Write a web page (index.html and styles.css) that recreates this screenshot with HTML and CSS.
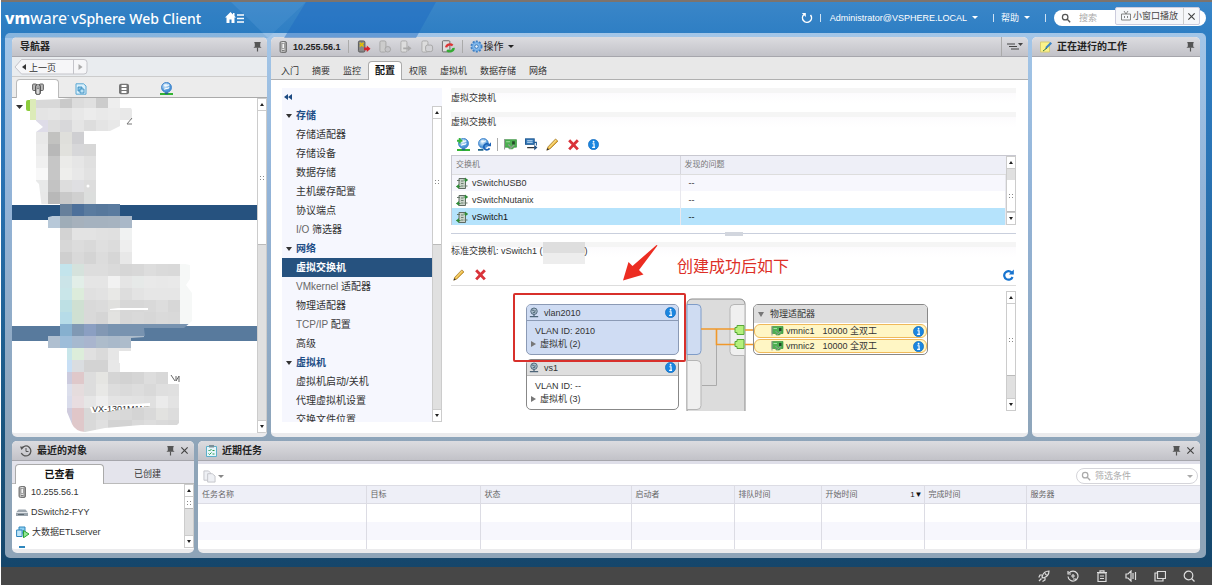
FILE: index.html
```html
<!DOCTYPE html>
<html lang="zh-CN">
<head>
<meta charset="utf-8">
<title>vSphere Web Client</title>
<link rel="stylesheet" href="styles.css">
</head>
<body>
<svg class="defs" aria-hidden="true">
  <defs>
    <linearGradient id="g-host" x1="0" x2="1"><stop offset="0" stop-color="#8a8a8a"/><stop offset=".5" stop-color="#eee"/><stop offset="1" stop-color="#777"/></linearGradient>
    <radialGradient id="g-globe" cx=".4" cy=".35"><stop offset="0" stop-color="#e8f6ff"/><stop offset="1" stop-color="#4a94d8"/></radialGradient>
  </defs>
  <symbol id="i-host" viewBox="0 0 12 12"><rect x="3" y=".5" width="6.500" height="11" rx="1.500" fill="url(#g-host)" stroke="#777"/><rect x="5" y="2.300" width="2.500" height="5" fill="#f4f4f4" stroke="#777" stroke-width=".6"/><path d="M5 9.800h2.500" stroke="#555"/></symbol>
  <symbol id="i-hosts" viewBox="0 0 12 12"><rect x=".6" y="1" width="4" height="6.500" rx="1" fill="#bbb" stroke="#555" stroke-width=".9"/><rect x="7.400" y="1" width="4" height="6.500" rx="1" fill="#bbb" stroke="#555" stroke-width=".9"/><rect x="3.600" y="1.800" width="4.800" height="9.600" rx="1.500" fill="url(#g-host)" stroke="#444" stroke-width=".9"/><path d="M5 4h2M5 5.600h2" stroke="#555" stroke-width=".7"/></symbol>
  <symbol id="i-vms" viewBox="0 0 12 12"><path d="M1 .8h7.500L11 3v8.200H1z" fill="#d9f0fc" stroke="#5aa7d2"/><path d="M3 4h4v4H3z" fill="#8bc6e8" stroke="#3186ba" stroke-width=".8"/><path d="M5 6h4v4H5z" fill="#b9e1f5" stroke="#3186ba" stroke-width=".8"/></symbol>
  <symbol id="i-db" viewBox="0 0 12 12"><rect x="1" y=".8" width="10" height="10.400" rx="2" fill="#777"/><path d="M3.500 2h5v2h-5zM3.500 5h5v2h-5zM3.500 8h5v2h-5z" fill="#fff"/></symbol>
  <symbol id="i-net" viewBox="0 0 12 12"><circle cx="6" cy="5" r="4.600" fill="url(#g-globe)" stroke="#3b7fca" stroke-width=".8"/><path d="M3.500 3c2-1 3 1 5-.5M4 7c1-2 3 0 4.500-2" fill="none" stroke="#fff"/><path d="M0 11h12" stroke="#32b432" stroke-width="1.800"/><path d="M4.500 9.800h3v1.600h-3z" fill="#268"/></symbol>
  <symbol id="i-netadd" viewBox="0 0 12 12"><use href="#i-net"/><path d="M2.500 0v5M0 2.500h5" stroke="#35b53a" stroke-width="1.800"/></symbol>
  <symbol id="i-netref" viewBox="0 0 12 12"><circle cx="5" cy="5" r="4.500" fill="url(#g-globe)" stroke="#3b7fca" stroke-width=".8"/><path d="M3 3c2-1 3 1 4.500-.5" fill="none" stroke="#fff"/><path d="M0 11h5" stroke="#268" stroke-width="1.500"/><path d="M10 6A2.800 2.800 0 1 0 10.600 9.500" fill="none" stroke="#1c63b8" stroke-width="1.600"/><path d="M12 4v3.600H8.400z" fill="#1c63b8"/></symbol>
  <symbol id="i-nic" viewBox="0 0 12 12"><path d="M.5 1.500h11v7H9.500L8 10H5L3.500 8.500h-3z" fill="#4db052" stroke="#2b8a32" stroke-width=".6"/><path d="M7.500 3h2.500v3H7.500z" fill="#244a28"/><path d="M2 3.500h3.500" stroke="#a5e0a0"/><path d="M.5 1v9.500M5 10l4.500-3.500M4 6l2 2" stroke="#999"/></symbol>
  <symbol id="i-migrate" viewBox="0 0 12 12"><rect x=".5" y=".8" width="8" height="5" fill="#3a7fc0" stroke="#245c94"/><path d="M2 2.500h5M2 4h5" stroke="#cfe6f8" stroke-width=".8"/><path d="M8 4h2.500v3" fill="none" stroke="#245c94"/><path d="M2 8.800h7" stroke="#333" stroke-width="1.200"/><path d="M8.500 6.500l3 2.300-3 2.400z" fill="#234f80"/></symbol>
  <symbol id="i-pencil" viewBox="0 0 12 12"><path d="M.8 11.200l1-3L8.800.9l2.200 2L3.800 10z" fill="#e9b33a" stroke="#a17a2c" stroke-width=".7"/><path d="M2.800 9l6.500-7" stroke="#fbe28f"/><path d="M.5 11.500l.8-2.300 1.500 1.300z" fill="#333"/></symbol>
  <symbol id="i-x" viewBox="0 0 12 12"><path d="M2 2l8 8.500M10 2L2 10.500" stroke="#d9333a" stroke-width="2.600"/></symbol>
  <symbol id="i-info" viewBox="0 0 12 12"><circle cx="6" cy="6" r="5.600" fill="#1a86e0" stroke="#0b62b4" stroke-width=".6"/><path d="M4.800 5.200h1.800v4M4.500 9.200h3.200" stroke="#fff" stroke-width="1.300" fill="none"/><circle cx="6.100" cy="3" r="1" fill="#fff"/></symbol>
  <symbol id="i-sw" viewBox="0 0 12 12"><path d="M3 1.500h6.500v10H3z" fill="#c9d3ca" stroke="#5f6b62"/><path d="M5 4h2.500M5 6.500h2.500M5 9h2.500" stroke="#6c8070"/><path d="M7.500 3h4M.5 9.500h4" stroke="#3c8a42" stroke-width="1.200"/><path d="M1 3.500h3M8.500 9h3" stroke="#66786a"/><path d="M9 .5L12 3 9 5.500zM3 7L0 9.500 3 12z" fill="#2f8b38"/></symbol>
  <symbol id="i-pg" viewBox="0 0 12 12"><circle cx="6" cy="4.500" r="3.900" fill="#a9bccb" stroke="#4d6578" stroke-width="1.100"/><path d="M3.500 3.500c2-2 2 2 4.500.5M4.500 6.500l3-1" stroke="#35505f" fill="none"/><path d="M6 8v2.500M1 10.800h10" stroke="#4d6578" stroke-width="1.500"/></symbol>
  <symbol id="i-pin" viewBox="0 0 10 12"><path d="M1.500 1h7v1.300H8V6l1.500 1.500H.5L2 6V2.300h-.5z" fill="#555"/><path d="M5 7v4.500" stroke="#555" stroke-width="1.300"/></symbol>
  <symbol id="i-close" viewBox="0 0 10 10"><path d="M1.500 1.500l7 7M8.500 1.500l-7 7" stroke="#444" stroke-width="1.300"/></symbol>
  <symbol id="i-hostx" viewBox="0 0 14 14"><rect x="1" y="1" width="7" height="12" rx="1.500" fill="#888" stroke="#555"/><path d="M2.500 3l4 4M6.500 3l-4 4" stroke="#e5c100" stroke-width="1.600"/><path d="M7 8h3V6l4 3.500-4 3.500v-2H7z" fill="#d8232a"/></symbol>
  <symbol id="i-hostdim" viewBox="0 0 14 14"><rect x="1.500" y="1" width="6.500" height="12" rx="1.500" fill="#ccc" stroke="#a5a5a5"/><circle cx="10" cy="10" r="3" fill="#c5c5c8" stroke="#a5a5a5"/></symbol>
  <symbol id="i-hostgo" viewBox="0 0 14 14"><rect x="1.500" y="1" width="6.500" height="12" rx="1.500" fill="#ddd" stroke="#aaa"/><path d="M4 8h5V6l4 3-4 3v-2H4z" fill="#aaa"/></symbol>
  <symbol id="i-hostbox" viewBox="0 0 14 14"><rect x="1.500" y="1" width="6.500" height="12" rx="1.500" fill="#ddd" stroke="#aaa"/><rect x="5.500" y="5.500" width="7.500" height="7" rx="2" fill="#d2d2d5" stroke="#a5a5a5"/></symbol>
  <symbol id="i-copy" viewBox="0 0 14 14"><path d="M1 1h5l2 2v8H1z" fill="#e8eaf0" stroke="#a9abb2"/><path d="M5 4h5l3 2.500V13H5z" fill="#e8eaf0" stroke="#a9abb2"/></symbol>
  <symbol id="i-hostref" viewBox="0 0 14 14"><rect x="1" y=".8" width="8" height="12" rx="1" fill="#ddd" stroke="#666"/><path d="M5 8a4 3.500 0 0 1 7-2" stroke="#d33" stroke-width="2.400" fill="none"/><path d="M13 8.500a4 3.500 0 0 1-7 2.500" stroke="#3a3" stroke-width="2.600" fill="none"/></symbol>
  <symbol id="i-gear" viewBox="0 0 14 14"><circle cx="7" cy="7" r="5.500" fill="#7eb6ea" stroke="#3f80c4" stroke-width="2" stroke-dasharray="2.200 1.300"/><circle cx="7" cy="7" r="4.200" fill="#86bdf0" stroke="#5a98d8" stroke-width=".6"/><circle cx="7" cy="7" r="1.900" fill="#e8f3fd" stroke="#3672b0"/></symbol>
  <symbol id="i-search" viewBox="0 0 12 12"><circle cx="5" cy="5" r="3.300" fill="none" stroke="currentColor" stroke-width="1.500"/><path d="M7.500 7.500L11 11" stroke="currentColor" stroke-width="1.700"/></symbol>
  <symbol id="i-refresh" viewBox="0 0 12 12"><path d="M9.500 3.300A4.300 4.300 0 1 0 10.500 8" fill="none" stroke="#1673cf" stroke-width="2.200"/><path d="M11.800.5v5H6.800z" fill="#1673cf"/></symbol>
</svg>

<div class="screen">
  <div class="client">
    <svg class="sheen" viewBox="0 0 500 36" aria-hidden="true"><path d="M0 0h230l37 36H0z" fill="#1f74bb" opacity=".2"/><path d="M230 0h75l-38 36z" fill="#62a6dc" opacity=".2"/><path d="M305 0h130l-20 36H283z" fill="#1c68c0" opacity=".45"/></svg>
    <header class="top">
      <div class="brand"><span class="logo"><b>vm</b>ware<sup>•</sup></span><span class="product">vSphere Web Client</span></div>
      <button class="plain home" aria-label="主页"><svg width="20" height="12" viewBox="0 0 20 12"><path d="M5.500 0L0 5.500h1.500V11h3V7.500h2V11h3V5.500H11L9.500 4V1H8v1.500z" fill="#fff"/><path d="M12 3h7M12 6.500h7M12 10h7" stroke="#fff" stroke-width="1.400"/></svg></button>
      <nav class="tools">
        <button class="plain" aria-label="刷新"><svg width="12" height="12" viewBox="0 0 12 12"><path d="M3 2.500a4.500 4.500 0 1 0 6.500.5" fill="none" stroke="#fff" stroke-width="1.500"/><path d="M.8 1h4v4z" fill="#fff"/></svg></button>
        <i class="bar"></i>
        <button class="plain user">Administrator@VSPHERE.LOCAL<i class="caret"></i></button>
        <i class="bar"></i>
        <button class="plain help">帮助<i class="caret"></i></button>
        <i class="bar"></i>
        <label class="search"><svg width="10" height="10"><use href="#i-search"/></svg><input type="text" placeholder="搜索" aria-label="搜索"><i class="caret"></i></label>
      </nav>
      <div class="pip"><button class="plain"><svg width="10" height="10" viewBox="0 0 10 10"><path d="M.5 3h9v6h-9zM3 0l2 3 2-3M3.500 5v2M6.500 5v2" fill="none" stroke="#777" stroke-width=".9"/></svg>小窗口播放</button><button class="plain pip-x" aria-label="关闭"><svg width="9" height="9"><use href="#i-close"/></svg></button></div>
    </header>

    <main class="frame">
      <div class="upper">
        <section class="panel navigator">
          <h2 class="head"><span>导航器</span><svg class="end" width="9" height="11"><use href="#i-pin"/></svg></h2>
          <div class="back"><svg class="backshape" viewBox="0 0 74 18" aria-hidden="true"><path d="M7.500 1.500H70a3 3 0 0 1 3 3V13a3 3 0 0 1-3 3H7.500L1 9z" fill="#f6f6f8" stroke="#c4c4ca"/><path d="M59.500 2v14" stroke="#c4c4ca"/><path d="M64.500 6v6l4-3z" fill="#aaa"/><path d="M12 6v6L8 9z" fill="#333"/></svg><button class="plain">上一页</button></div>
          <div class="icontabs">
            <button class="on" aria-label="主机和集群"><svg width="12" height="12"><use href="#i-hosts"/></svg></button>
            <button aria-label="虚拟机和模板"><svg width="12" height="12"><use href="#i-vms"/></svg></button>
            <button aria-label="存储"><svg width="12" height="12"><use href="#i-db"/></svg></button>
            <button aria-label="网络"><svg width="13" height="13"><use href="#i-net"/></svg></button>
          </div>
          <div class="tree">
            <div class="treeview"><svg id="mosaic" width="245" height="340" viewBox="12 98 245 340" aria-hidden="true"></svg></div>
            <div class="sb"><button class="up" aria-label="上"></button><i class="thumb t40"></i><i class="track"></i><button class="down" aria-label="下"></button></div>
          </div>
        </section>

        <section class="panel center">
          <h2 class="head">
            <svg width="12" height="12"><use href="#i-host"/></svg><span class="hostname">10.255.56.1</span><i class="sep"></i>
            <span class="acts"><svg width="14" height="13"><use href="#i-hostx"/></svg><svg width="14" height="13"><use href="#i-hostdim"/></svg><svg width="14" height="13"><use href="#i-hostgo"/></svg><svg width="14" height="13"><use href="#i-hostbox"/></svg><svg width="14" height="13"><use href="#i-hostref"/></svg></span>
            <i class="sep"></i><button class="plain ops"><svg width="13" height="13"><use href="#i-gear"/></svg>操作<i class="caret"></i></button>
            <span class="end viewopt"><svg width="16" height="8" viewBox="0 0 16 8"><path d="M0 1h8M2 3.500h8M4 6h8" stroke="#444" stroke-width="1.200"/><path d="M11 0h5l-2.500 3z" fill="#444"/></svg></span>
          </h2>
          <nav class="tabs"><button>入门</button><button>摘要</button><button>监控</button><button class="on">配置</button><button>权限</button><button>虚拟机</button><button>数据存储</button><button>网络</button></nav>
          <div class="work">
            <aside class="side">
              <button class="plain collapse" aria-label="折叠"><svg width="8" height="6" viewBox="0 0 8 6"><path d="M4 0v6L0 3zM8 0v6L4 3z" fill="#1d4b82"/></svg></button>
              <div class="sidebody">
                <nav class="menu">
                  <h3>存储</h3><a href="#">存储适配器</a><a href="#">存储设备</a><a href="#">数据存储</a><a href="#">主机缓存配置</a><a href="#">协议端点</a><a href="#"><small>I/O</small> 筛选器</a>
                  <h3>网络</h3><a href="#" class="on">虚拟交换机</a><a href="#"><small>VMkernel</small> 适配器</a><a href="#">物理适配器</a><a href="#"><small>TCP/IP</small> 配置</a><a href="#">高级</a>
                  <h3>虚拟机</h3><a href="#">虚拟机启动/关机</a><a href="#">代理虚拟机设置</a><a href="#">交换文件位置</a>
                </nav>
                <div class="sb"><button class="up" aria-label="上"></button><i class="thumb t40"></i><i class="track"></i><button class="down" aria-label="下"></button></div>
              </div>
            </aside>
            <div class="main">
              <h3 class="title">虚拟交换机</h3>
              <h3 class="title">虚拟交换机</h3>
              <div class="bar1"><svg width="13" height="13"><use href="#i-netadd"/></svg><svg width="13" height="13"><use href="#i-netref"/></svg><i class="sep"></i><svg width="13" height="13"><use href="#i-nic"/></svg><svg width="13" height="13"><use href="#i-migrate"/></svg><svg width="13" height="13"><use href="#i-pencil"/></svg><svg width="13" height="13"><use href="#i-x"/></svg><svg width="11" height="11"><use href="#i-info"/></svg></div>
              <div class="switches">
                <table><thead><tr><th class="c1">交换机</th><th>发现的问题</th></tr></thead>
                <tbody><tr class="alt"><td><svg width="12" height="12"><use href="#i-sw"/></svg>vSwitchUSB0</td><td>--</td></tr><tr><td><svg width="12" height="12"><use href="#i-sw"/></svg>vSwitchNutanix</td><td>--</td></tr><tr class="on"><td><svg width="12" height="12"><use href="#i-sw"/></svg>vSwitch1</td><td>--</td></tr></tbody></table>
                <div class="sb"><button class="up" aria-label="上"></button><i class="track fix"></i><i class="thumb grow"></i><button class="down" aria-label="下"></button></div>
              </div>
              <div class="split"><i></i></div>
              <h3 class="title detail">标准交换机: vSwitch1 (<i class="masked"></i>)</h3>
              <div class="bar2"><svg width="12" height="12"><use href="#i-pencil"/></svg><svg width="13" height="13"><use href="#i-x"/></svg><svg class="end" width="12" height="12"><use href="#i-refresh"/></svg></div>
              <div class="canvasrow">
                <div class="canvas">
                  <svg class="wires" width="480" height="120" viewBox="451 291 480 120" aria-hidden="true">
                    <path d="M687 411V304a5 5 0 0 1 5-5h48a5 5 0 0 1 5 5v107z" fill="#dcdcdc"/><path d="M687 411V304a5 5 0 0 1 5-5h48a5 5 0 0 1 5 5v107" fill="none" stroke="#8c8c8c"/>
                    <path d="M687 304.500h10a4 4 0 0 1 4 4v42a4 4 0 0 1-4 4h-10z" fill="#cfdcf2" stroke="#7f9cc8"/>
                    <path d="M687 360.500h10a4 4 0 0 1 4 4v41a4 4 0 0 1-4 4h-10z" fill="#f0f0f0" stroke="#b5b5b5"/>
                    <path d="M744.500 304.500H734a4 4 0 0 0-4 4v43a4 4 0 0 0 4 4h10.500" fill="#f0f0f0" stroke="#b5b5b5"/>
                    <path d="M702 385.500h14.500V329" stroke="#aaa" fill="none"/>
                    <path d="M701 329h34M716.500 329v15.500H735M745 330h9M745 344.500h9" stroke="#f0982a" stroke-width="1.600" fill="none"/>
                    <path id="plug" d="M735 327.500h2v-2h7v9h-7v-2h-2z" fill="#b4f07c" stroke="#58a838"/>
                    <use href="#plug" y="14"/>
                  </svg>
                  <article class="pg p1"><h4><svg width="10" height="11"><use href="#i-pg"/></svg>vlan2010<svg class="end" width="11" height="11"><use href="#i-info"/></svg></h4><p>VLAN ID: 2010</p><p class="vm">虚拟机 (2)</p></article>
                  <article class="pg p2"><h4><svg width="10" height="11"><use href="#i-pg"/></svg>vs1<svg class="end" width="11" height="11"><use href="#i-info"/></svg></h4><p>VLAN ID: --</p><p class="vm">虚拟机 (3)</p></article>
                  <article class="nics"><h4>物理适配器</h4><div class="nic"><svg width="13" height="12"><use href="#i-nic"/></svg><span>vmnic1</span><span>10000 全双工</span><svg class="end" width="11" height="11"><use href="#i-info"/></svg></div><div class="nic"><svg width="13" height="12"><use href="#i-nic"/></svg><span>vmnic2</span><span>10000 全双工</span><svg class="end" width="11" height="11"><use href="#i-info"/></svg></div></article>
                  <div class="mark"></div>
                  <svg class="arrow" width="36" height="38" viewBox="0 0 36 38" aria-hidden="true"><path d="M35.500.5L17 25l4.500 4.500L1 35.500 6.500 17l4 4L34.500 0z" fill="#ec2d22"/></svg>
                  <strong class="note">创建成功后如下</strong>
                </div>
                <div class="sb"><button class="up" aria-label="上"></button><i class="thumb t70"></i><i class="track"></i><button class="down" aria-label="下"></button></div>
              </div>
            </div>
          </div>
        </section>

        <section class="panel progress">
          <h2 class="head"><svg width="12" height="12" viewBox="0 0 12 12"><path d="M.5 1h9v10h-9z" fill="#fbf28a" stroke="#d8cc70"/><path d="M5 8l1-2.500L10.500 1 12 2.500 7.500 7z" fill="#3a84c8"/><path d="M3 10l4-3" stroke="#3c7c3c"/></svg><span>正在进行的工作</span><svg class="end" width="9" height="11"><use href="#i-pin"/></svg></h2>
          <div class="blank"></div>
        </section>
      </div>

      <div class="lower">
        <section class="panel recent">
          <h2 class="head"><svg width="12" height="12" viewBox="0 0 12 12"><path d="M1.500 3.500A5 5 0 1 1 1.300 8" fill="none" stroke="#555" stroke-width="1.300"/><path d="M0 1.500l4 .5-2.500 3z" fill="#555"/><path d="M6 3v3.500h2.500" fill="none" stroke="#555"/></svg><span>最近的对象</span><svg class="end" width="9" height="11"><use href="#i-pin"/></svg><svg width="9" height="9"><use href="#i-close"/></svg></h2>
          <nav class="halftabs"><button class="on">已查看</button><button>已创建</button></nav>
          <div class="recentbody">
            <ul><li><svg width="12" height="12"><use href="#i-host"/></svg>10.255.56.1</li><li><svg width="12" height="12" viewBox="0 0 12 12"><path d="M0 6.500l2.500-3h7l2.500 3V10H0z" fill="#9aa4ad"/><path d="M0 6.500h12" stroke="#e2e6ea"/><path d="M2 8.500h6" stroke="#5c6870"/></svg>DSwitch2-FYY</li><li><svg width="13" height="12" viewBox="0 0 13 12"><path d="M3 1h6v6H3z" fill="#8ed0f2" stroke="#2e86bd"/><path d="M.6 4h5.500v6.500H.6z" fill="#bfe5f8" stroke="#2e86bd"/><path d="M7.500 4.500v7.300L13 8z" fill="#8fe890" stroke="#1b9a26" stroke-width=".9"/></svg>大数据ETLserver</li><li><svg width="12" height="12" viewBox="0 0 12 12"><path d="M3 0h6v2H3z" fill="#2e86bd"/></svg></li></ul>
            <div class="sb"><button class="up" aria-label="上"></button><i class="thumb t12"></i><i class="track"></i><button class="down" aria-label="下"></button></div>
          </div>
        </section>
        <section class="panel tasks">
          <h2 class="head"><svg width="11" height="12" viewBox="0 0 11 12"><path d="M.5 1.500h10v10H.5z" fill="#e7f6fb" stroke="#5cb0ca"/><path d="M3 0h5v2.500H3z" fill="#7a8f98"/><path d="M2.500 5l1 1 2-2M2.500 8.500l1 1 2-2M6.500 5.500h2M6.500 9h2" stroke="#2a9b4c" fill="none"/></svg><span>近期任务</span><svg class="end" width="9" height="11"><use href="#i-pin"/></svg><svg width="9" height="9"><use href="#i-close"/></svg></h2>
          <div class="taskbar"><button class="plain dim" aria-label="复制"><svg width="13" height="13"><use href="#i-copy"/></svg><i class="caret"></i></button><label class="filter"><svg width="10" height="10"><use href="#i-search"/></svg><input type="text" placeholder="筛选条件" aria-label="筛选条件"><i class="caret"></i></label></div>
          <table class="tasktable">
            <colgroup><col class="w168"><col class="w114"><col class="w151"><col class="w103"><col class="w87"><col class="w103"><col class="w102"><col></colgroup>
            <thead><tr><th>任务名称</th><th>目标</th><th>状态</th><th>启动者</th><th>排队时间</th><th>开始时间<span class="sort">1▼</span></th><th>完成时间</th><th>服务器</th></tr></thead>
            <tbody><tr><td></td><td></td><td></td><td></td><td></td><td></td><td></td><td></td></tr><tr class="alt"><td></td><td></td><td></td><td></td><td></td><td></td><td></td><td></td></tr><tr class="last"><td></td><td></td><td></td><td></td><td></td><td></td><td></td><td></td></tr></tbody>
          </table>
        </section>
      </div>
    </main>
  </div>
  <footer class="osbar">
    <svg width="12" height="12" viewBox="0 0 12 12"><path d="M4 7c1-4 4-6 7-6 0 3-2 6-6 7zM4 5H2L.8 7.500M7 8v2L4.500 11.500M1 11l2.500-2.500M7 3.500l1.500 1.500"/></svg>
    <svg width="12" height="12" viewBox="0 0 12 12"><path d="M2 3a5 5 0 1 1-1 3.500M4 6h4M6 4v4M1 1v3h3M6 9h3"/></svg>
    <svg width="12" height="12" viewBox="0 0 12 12"><path d="M2 3h8v8.500H2zM1 2.500h10M4 2V.8h4V2M4 6h4M4 8.500h4"/></svg>
    <svg width="12" height="12" viewBox="0 0 12 12"><path d="M1 4h2l3-3v10L3 8H1zM8 3v6M10.500 2v8"/></svg>
    <svg width="12" height="12" viewBox="0 0 12 12"><path d="M3.500 1.500h8v7h-8zM3 3H1v8h8V9"/></svg>
    <svg width="12" height="12" viewBox="0 0 12 12"><circle cx="5.500" cy="5.500" r="4.300"/><path d="M8.500 8.500l3 3"/></svg>
  </footer>
</div>
<script src="mosaic.js"></script>
</body>
</html>
```

FILE: styles.css
```css
* { box-sizing: border-box; }
body { margin: 0; background: #fff; color: #333; font: 9px/12px "Liberation Sans", "Noto Sans CJK SC", sans-serif; }
button, input { font: inherit; color: inherit; margin: 0; padding: 0; border: 0; background: none; }
h2, h3, h4, p, ul { margin: 0; padding: 0; font-size: inherit; font-weight: normal; list-style: none; }
a { color: inherit; text-decoration: none; }
svg { flex: none; display: block; }
small { font-size: 10px; color: #666; }
.defs { position: absolute; width: 0; height: 0; }
.plain { display: flex; align-items: center; }
.end { margin-left: auto; }
.caret { border: 3px solid transparent; border-top-color: currentColor; border-bottom: 0; margin-left: 5px; }

.screen { display: flex; flex-direction: column; min-height: 100vh; padding: 0 2px 2px 1px; }
.client { position: relative; flex: 1; display: flex; flex-direction: column; border-top: 2px solid #7d736c; padding: 0 6px 9px 4px; background: linear-gradient(#3a86c8, #2f7fc4 30px, #2a73b4 30%, #19557f 75%, #15466b); }
.sheen { position: absolute; left: 0; top: 0; width: 500px; height: 36px; }

.top { position: relative; display: flex; align-items: center; height: 31px; color: #fff; }
.brand { display: flex; align-items: baseline; font-family: "Noto Sans", sans-serif; line-height: 20px; }
.logo { font-size: 16px; }
.logo b { font-weight: 800; }
.logo sup { font-size: 6px; }
.product { font-size: 14px; font-weight: 500; margin-left: 2px; }
.home { margin-left: 24px; }
.tools { display: flex; align-items: center; margin-left: auto; gap: 7px; }
.bar { width: 1px; height: 8px; background: #cfe2f4; }
.user { margin: 0 8px 0 2px; }
.help { margin-right: 8px; }
.search { display: flex; align-items: center; width: 152px; height: 16px; padding: 0 7px; margin-left: 1px; border-radius: 8px; background: #fff; color: #555; }
.search input { flex: 1; min-width: 0; margin-left: 8px; }
input::placeholder { color: #aaa; opacity: 1; }
.pip { position: absolute; right: 6px; top: 5px; display: flex; height: 18px; background: #f6f7fa; border: 1px solid #ccd; border-radius: 2px; color: #444; }
.pip button { gap: 2px; padding: 0 5px; }
.pip .pip-x { border-left: 1px solid #ccc; padding: 0 3px; }

.frame { flex: 1; display: flex; flex-direction: column; gap: 4px; padding: 4px 6px 5px 7px; border-radius: 5px; background: linear-gradient(#a3c6e8, #93b4d8 30%, #8ea4b8 80%); }
.upper { flex: 1; display: flex; gap: 4px; }
.lower { display: flex; gap: 4px; }
.panel { display: flex; flex-direction: column; min-width: 0; background: #fff; border-radius: 5px; overflow: hidden; border-bottom: 4px solid #ebebed; }
.head { display: flex; align-items: center; gap: 5px; height: 20px; flex: none; padding: 0 5px 0 8px; font-size: 10px; font-weight: bold; color: #222; background: linear-gradient(#dcdce0, #c2c2c8); border-bottom: 1px solid #a6a6ac; }
.hostname { font-size: 9px; }
.navigator { width: 255px; }
.center { flex: 1; }
.center .head { padding-left: 6px; gap: 4px; }
.progress { width: 168px; }
.recent { width: 182px; }
.tasks { flex: 1; }
.blank { flex: 1; }

.sb { display: flex; flex-direction: column; flex: none; width: 10px; background: #e0e0e0; border: solid #ccc; border-width: 0 1px; }
.sb button { flex: none; height: 13px; background: #fff; border: solid #ccc; border-width: 1px 0; display: flex; align-items: center; justify-content: center; }
.sb button::before { content: ""; border: 2px solid transparent; }
.sb .up::before { border-bottom: 3px solid #222; border-top: 0; }
.sb .down::before { border-top: 3px solid #222; border-bottom: 0; }
.thumb { display: flex; align-items: center; justify-content: center; background: #fff; border-bottom: 1px solid #bbb; }
.thumb::before { content: ""; width: 4px; height: 4px; background: linear-gradient(#888, #888) 0 0/1px 1px no-repeat, linear-gradient(#888, #888) 100% 0/1px 1px no-repeat, linear-gradient(#888, #888) 0 100%/1px 1px no-repeat, linear-gradient(#888, #888) 100% 100%/1px 1px no-repeat; }
.t40 { height: 40%; }
.t70 { height: 60%; }
.t12 { height: 12px; }
.track { flex: 1; }
.track.fix { flex: none; height: 11px; }
.thumb.grow { flex: 1; }

.back { position: relative; display: flex; align-items: center; height: 20px; padding: 2px 0 0 17px; background: #e9ecef; border-bottom: 1px solid #ccc; font-size: 9px; }
.back .plain { position: relative; }
.backshape { position: absolute; left: 2px; top: 1px; width: 74px; height: 18px; }
.icontabs { display: flex; height: 21px; padding: 2px 0 0 4px; background: #ececec; box-shadow: inset 0 -1px #aaa; }
.icontabs button { display: flex; justify-content: center; align-items: center; width: 43px; }
.icontabs .on { background: #fff; border: 1px solid #bbb; border-bottom: 0; border-radius: 4px 4px 0 0; }
.tree { flex: 1; display: flex; min-height: 335px; }
.treeview { flex: 1; height: 335px; overflow: hidden; }

.acts { display: flex; gap: 7px; margin-left: 1px; }
.sep { width: 1px; height: 13px; background: #aaa; margin: 0 3px; }
.ops { gap: 1px; font-weight: normal; }
.ops .caret { margin-left: 3px; }
.viewopt { align-self: stretch; display: flex; align-items: center; border-left: 1px solid #aaa; padding-left: 5px; }
.tabs { display: flex; height: 23px; flex: none; padding: 4px 0 0 4px; background: #e8e8e8; box-shadow: inset 0 -1px #b0b0b0; }
.tabs button { padding: 0 6px; margin-right: 1px; }
.tabs .on { background: #fff; border: 1px solid #aaa; border-bottom: 0; border-radius: 4px 4px 0 0; font-weight: bold; font-size: 10px; color: #111; }
.work { flex: 1; display: flex; gap: 9px; padding: 8px 12px 11px 11px; }
.side { width: 160px; flex: none; display: flex; flex-direction: column; background: #f6f7fe; }
.collapse { height: 18px; padding-left: 2px; }
.sidebody { display: flex; height: 316px; }
.menu { flex: 1; overflow: hidden; font-size: 10px; line-height: 19px; }
.menu a { display: block; height: 19px; padding-left: 14px; white-space: nowrap; }
.menu h3 { height: 19px; padding-left: 4px; display: flex; align-items: center; gap: 4px; color: #1f4e86; font-weight: bold; }
.menu h3::before { content: ""; border: 3px solid transparent; border-top: 4px solid #333; border-bottom: 0; }
.menu .on { background: #26527f; color: #fff; font-weight: bold; }

.main { flex: 1; min-width: 0; display: flex; flex-direction: column; }
.title { height: 24px; padding-top: 4px; background: linear-gradient(#f5f5f5 5px, #fcfbfd 5px, #fff 15px); }
.bar1 { display: flex; align-items: center; gap: 8px; height: 19px; padding: 0 0 2px 6px; }
.bar1 .sep { margin: 0 -2px; }
.switches { display: flex; border: solid #c8c8d0; border-width: 1px 0 0 1px; }
.switches table { flex: 1; border-collapse: collapse; table-layout: fixed; }
.switches th { height: 18px; padding: 0 4px; text-align: left; font-weight: normal; font-size: 8px; color: #777; background: #eeeff7; border-bottom: 1px solid #ddd; }
.switches th + th { border-left: 1px solid #d5d5dd; }
.c1 { width: 228px; }
.switches td { height: 17px; padding: 0 8px; line-height: 12px; border-right: 1px solid #e8e8ee; }
.switches td:first-child { padding: 0 4px; }
.switches td svg { float: left; margin-right: 4px; }
.switches .alt { background: #f7f7fd; }
.switches .on { background: #b5e3fc; color: #111; }
.split { display: flex; justify-content: center; align-items: center; height: 17px; background: linear-gradient(#c9cfdd, #c9cfdd) 0 8px/100% 1px no-repeat; }
.split i { width: 18px; height: 4px; background: #d2d6de; }
.detail { display: flex; padding-top: 3px; height: 22px; }
.masked { width: 42px; height: 22px; margin-top: -3px; background: linear-gradient(#dedede 50%, #ededed 50%); }
.bar2 { display: flex; align-items: center; gap: 9px; height: 22px; padding: 0 2px; border-bottom: 1px solid #ddd; }
.canvasrow { display: flex; margin-top: 5px; height: 120px; }
.canvas { position: relative; flex: 1; }
.wires { position: absolute; left: 0; top: 0; }
.pg, .nics { position: absolute; background: #fff; border: 1px solid #888; border-radius: 5px; overflow: hidden; }
.pg { left: 75px; width: 153px; height: 51px; }
.p1 { top: 13px; }
.p2 { top: 68px; }
.pg h4, .nics h4 { display: flex; align-items: center; height: 16px; padding: 0 2px; gap: 5px; background: #dedede; border-bottom: 1px solid #bbb; }
.pg p { padding-left: 8px; line-height: 13px; }
.pg h4 + p { padding-top: 4px; }
.pg .vm { padding-left: 4px; }
.vm::before { content: ""; display: inline-block; border: 3px solid transparent; border-left: 5px solid #777; border-right: 0; margin-right: 4px; }
.p1, .p1 h4 { background: #cfdcf3; border-color: #8b9ab5; }
.nics { left: 302px; top: 13px; width: 175px; height: 51px; }
.nics h4 { height: 18px; padding-left: 4px; gap: 6px; border: 0; }
.nics h4::before { content: ""; border: 3px solid transparent; border-top: 5px solid #777; border-bottom: 0; }
.nic { display: flex; align-items: center; height: 14px; margin-top: 1px; padding: 0 2px 0 16px; border: 1px solid #efb95a; border-radius: 6px; background: #fff6c4; }
.nic span { margin: 0 6px 0 2px; }
.mark { position: absolute; left: 62px; top: 2px; width: 173px; height: 69px; border: 2px solid #d8302b; border-radius: 2px; }
.arrow { position: absolute; left: 171px; top: -46px; }
.note { position: absolute; left: 226px; top: -35px; font-size: 16px; line-height: 22px; font-weight: normal; color: #dd2f27; white-space: nowrap; }

.halftabs { display: flex; height: 23px; padding: 3px 3px 0; background: #e4e4ec; box-shadow: inset 0 -1px #bbb; }
.halftabs button { flex: 1; }
.halftabs .on { background: #fff; border: 1px solid #aaa; border-bottom: 0; border-radius: 4px 4px 0 0; font-weight: bold; font-size: 10px; color: #111; }
.recentbody { display: flex; height: 64px; }
.recentbody ul { flex: 1; overflow: hidden; margin-top: -2px; }
.recentbody li { display: flex; align-items: center; height: 20px; padding-left: 4px; gap: 3px; }
.taskbar { display: flex; justify-content: space-between; align-items: center; height: 24px; padding: 3px 2px 0 5px; border-top: 3px solid #dfdfe9; }
.dim { opacity: .7; color: #555; }
.dim .caret, .filter .caret { margin-left: 2px; }
.filter { display: flex; align-items: center; width: 122px; height: 16px; padding: 0 4px; gap: 4px; border: 1px solid #d5d5da; border-radius: 8px; color: #aaa; }
.filter input { flex: 1; min-width: 0; }
.tasktable { width: 100%; border-collapse: collapse; table-layout: fixed; }
.tasktable th { height: 18px; padding: 0 4px; text-align: left; font-weight: normal; font-size: 8px; color: #666; background: #eeeff7; border: solid #dcdce4; border-width: 1px 1px 1px 0; }
.tasktable td { height: 18px; padding: 0; border-right: 1px solid #dcdce4; }
.tasktable .last td { height: 9px; }
.tasktable th:last-child, .tasktable td:last-child { border-right: 0; }
.tasktable .alt { background: #f7f7fd; }
.sort { float: right; color: #111; margin-right: -3px; }
.w168 { width: 168px; }
.w114 { width: 114px; }
.w151 { width: 151px; }
.w103 { width: 103px; }
.w87 { width: 87px; }
.w102 { width: 102px; }

.osbar { display: flex; justify-content: flex-end; align-items: center; gap: 17px; height: 18px; padding-right: 17px; background: #474747; }
.osbar svg { fill: none; stroke: #ddd; stroke-width: 1.2; }
```

FILE: mosaic.js
```js
// Redacted inventory tree: rows of 12px tiles as [top, left, colours...].
const rows = [
  [96, 36, 'd8d8d8', 'd8d8d8', 'c9c9c9', 'dcdcdc', 'e0e0e0', 'cccccc', 'eeeeee'],
  [108, 36, 'e4e4e4', 'e6e6e6', 'e2e2e2', 'e8e8e8', 'ececec', 'e9e9e9', 'ebebeb', 'e8e8e8'],
  [120, 36, 'dedce8', 'dddddd', 'd8d8da', 'e5e5e5', 'dddddd', 'e4e4e4', 'e8e8e8'],
  [132, 36, 'e8e8e8', 'c2c2c0', 'dfdfdb', 'cfcfd2'],
  [144, 36, 'ebebeb', 'b8b8b8', 'e1e1dd', 'd7d7d9', 'd7d7d7'],
  [156, 36, 'f0f0f0', 'c6c6c6', 'ebebe9', 'e6e6e6', 'e0e0e0'],
  [168, 36, 'f8f8f8', 'c6c6c6', 'eeeeec', 'e8e8e8', 'e2e2e2'],
  [180, 36, 'e8e9e9', 'c3c3c3', 'dddddd', 'dfdfe2', 'dddddd'],
  [192, 36, 'e8e8e8', 'b8b8b8', 'c9c9c9', 'd0d0d0', 'dcdedd'],
  [204, 60, '67809b', '4d709a', '5a7b9f', '57789c', '5a7b9f'],
  [216, 48, 'b7c8d8', '9fadb8', 'a6b1bc', 'a5b2bf', 'a5b2bf', 'a6b3c0', 'a9b8c8'],
  [228, 60, 'd3d3d3', 'e3e3e3', 'e3e3e3', 'e1e1e1', 'e0e0e0', 'f0f2f2'],
  [240, 60, 'd7d7d7', 'dcdcdc', 'd9d9d9', 'dfdfdf', 'dcdcdc', 'eeeeee'],
  [252, 60, 'cfcfcf', 'd9d9d9', 'd4d4d4', 'dcdcdc', 'd6d6d6', 'e8e8e8'],
  [264, 60, 'c3e4ec', 'd5e2dc', 'dddddd', 'dddddd', 'dadada', 'd6d6d6', 'd8d8d8', 'dddddd', 'dadada', 'd9d9d9', 'f6f8f7'],
  [276, 60, 'cbe4e8', 'e2eee8', 'e5e5e5', 'e5e5e5', 'f2f2f2', 'e5e5e5', 'e6e9e8', 'e9e9e9', 'e8e8e8', 'e9e9e9', 'f6f8f7'],
  [288, 60, 'c9e6e9', 'dcecdb', 'e0e0e0', 'e2e2e2', 'e8e8e6', 'dddddd', 'e3e3e3', 'e6e6e6', 'e6e6e6', 'e6e6e6', 'f6f8f7'],
  [300, 60, 'bde0e4', 'cfe0d2', 'd9d9d9', 'dbdbdb', 'e0e0de', 'd7d7d7', 'd7d7d7', 'd9d9d9', 'dddddd', 'd7d7d7', 'f6f8f7'],
  [312, 60, 'b6dce8', 'cfe0d2', 'd9d9d9', 'd5d5d5', 'e2e2e0', 'd7d7d7', 'd9d9d9', 'd7d7d7', 'dadada', 'd9d9d9', 'f6f8f7'],
  [324, 60, '86b0cf', '8099b4', '8b9fc2', '8298b4', '7893b0', '7893b0', '7893b0', '7893b0', '7893b0', '7893b0', '7893b0'],
  [336, 48, 'afbfd0', '9dbdd9', 'a6b9cf', 'a9b5ce', 'adbccb', 'a9b9ca', 'adbccb', 'adbccb'],
  [348, 60, 'c8e6ea', 'dcedda', 'e0e0e0', 'dadada', 'e6e6e6', 'e4e4e4'],
  [360, 60, 'c8dff5', 'dadde0', 'd3d3d3', 'd3d3d3', 'e8e8e8'],
  [372, 60, 'cccbde', 'dfc8ca', 'dddddd', 'e5e5e2', 'd5d5d5', 'd2d2d2', 'd5d5d5', 'dddddd', 'd8d8d8'],
  [384, 60, 'dcdfec', 'e5dcdd', 'dddddd', 'e8e8e6', 'dddddd', 'dadada', 'dddddd', 'd9d9d9', 'dfdfdf', 'e0e0e0'],
  [396, 60, 'd9dceb', 'e8dde0', 'e6e6e6', 'eeeeee', 'e4e4e4', 'e3e3e3', 'e2e2e2', 'e0e0e0', 'ebebeb', 'e3e3e3'],
  [408, 60, 'cfcbdd', 'e0c6c8', 'd8d8d8', 'dddddd', 'dadada', 'd8d8d8', 'd4d4d4', 'd9d9d9', 'e2e2e0', 'dddddd'],
  [420, 60, 'd0cede', 'dfc8ca', 'd9d9d9', 'e0e0e0', 'd3d3d3', 'd3d3d3', 'd9d9d9', 'dddddd', 'dadada', 'd8d8d8'],
  [432, 60, 'd4d4dc', 'd0d0d4', 'd8d8d8']
];
const rect = (x, y, w, h, c) => `<rect x="${x}" y="${y}" width="${w}" height="${h}" fill="${c}"/>`;
let out = rect(12, 205, 245, 15, '#26527f') + rect(12, 326, 245, 15, '#587a9d');
out += '<path d="M16 105h7l-3.500 4z" fill="#333"/><rect x="26" y="100" width="10" height="11" rx="2" fill="#8ccc3c"/><rect x="30" y="99" width="6" height="21" fill="#dcebb8"/>';
out += '<clipPath id="brush"><path d="M36 100l26-1 34-3h24l8 6 5 10-1 8-22 11H84v12h12v60h22q12 3 15 12v12h-1v36h48l10 2v14l-4 6 6 8v28l-8 7h-40l1 9-14 1v13h-12v12h48l12 14v46l-2 2h-36l-36 3-20 4q-10-1-13-8l-5-12V348H44q0-8 4-12l8-5V228H48q-4-4-3-10l11-3-14-6-3-25-3-3v-49l7-5-9-8z"/></clipPath><g clip-path="url(#brush)">';
for (const [y, x, ...tiles] of rows) tiles.forEach((c, i) => { out += rect(x + i * 12, y, 12, 12, '#' + c); });
out += '</g><path d="M110 309l8-1h30v2h-38z" fill="#fff"/><circle cx="88" cy="186" r="1.500" fill="#fff"/>';
out += '<clipPath id="strip"><path d="M90 407l60-5v4l-24 3-34 5z"/></clipPath><path d="M90 407l60-4v3l-24 3-34 4z" fill="#fff"/><text x="92" y="412" font-size="9" fill="#333" clip-path="url(#strip)">VX-1301M1NT</text><path d="M171 375l4 6M176 376v5l3-5v6" stroke="#666" fill="none"/><path d="M132 118l-5 6h5" stroke="#777" fill="none"/>';
document.getElementById('mosaic').innerHTML = out;
```
